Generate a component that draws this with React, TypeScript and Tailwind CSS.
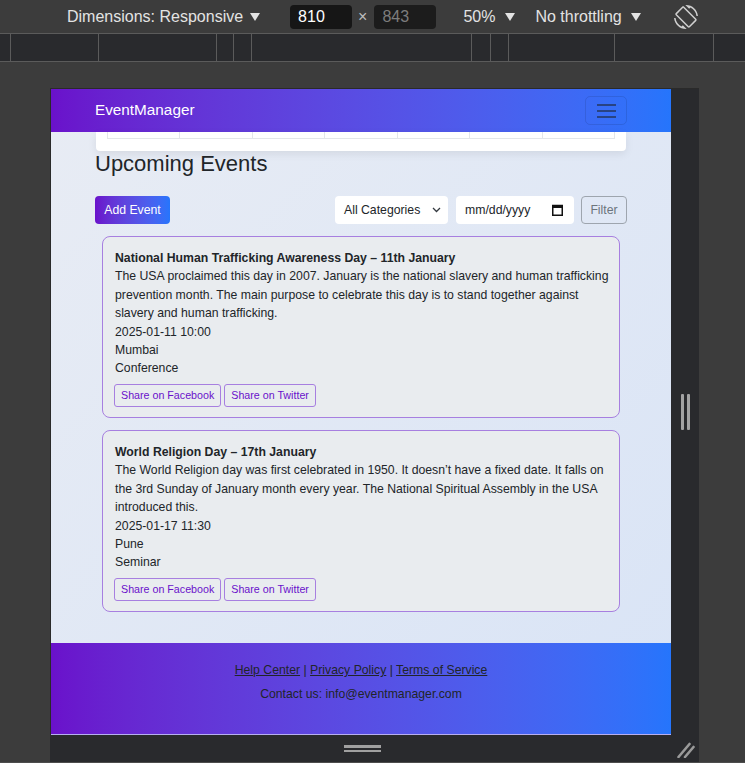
import type { ReactNode } from 'react';

const events = [
  {
    title: 'National Human Trafficking Awareness Day – 11th January',
    description:
      'The USA proclaimed this day in 2007. January is the national slavery and human trafficking prevention month. The main purpose to celebrate this day is to stand together against slavery and human trafficking.',
    date: '2025-01-11 10:00',
    location: 'Mumbai',
    category: 'Conference',
  },
  {
    title: 'World Religion Day – 17th January',
    description:
      'The World Religion day was first celebrated in 1950. It doesn’t have a fixed date. It falls on the 3rd Sunday of January month every year. The National Spiritual Assembly in the USA introduced this.',
    date: '2025-01-17 11:30',
    location: 'Pune',
    category: 'Seminar',
  },
];

const rulerMarks = [10, 98, 216, 233, 251, 471, 490, 508, 614, 713];

function Caret() {
  return (
    <svg width="10" height="8" viewBox="0 0 10 8" className="shrink-0">
      <path d="M0 0h10L5 8z" fill="#e3e3e3" />
    </svg>
  );
}

function DeviceToolbar() {
  return (
    <div className="flex h-[33px] items-center pl-[67px] text-[16px] text-[#e3e3e3]">
      <span>Dimensions: Responsive</span>
      <span className="ml-[7px]">
        <Caret />
      </span>
      <div className="ml-[30px] flex h-[24px] w-[62px] items-center rounded-[4px] bg-[#161616] pl-[8px] text-white">
        810
      </div>
      <span className="ml-[6px] text-[#bdbdbd]">×</span>
      <div className="ml-[7px] flex h-[24px] w-[62px] items-center rounded-[4px] bg-[#1c1c1c] pl-[8px] text-[#7d7d7d]">
        843
      </div>
      <span className="ml-[27px]">50%</span>
      <span className="ml-[10px]">
        <Caret />
      </span>
      <span className="ml-[20px]">No throttling</span>
      <span className="ml-[9px]">
        <Caret />
      </span>
      <svg width="24" height="24" viewBox="0 0 24 24" className="ml-[33px]" fill="#cfcfcf">
        <path d="M16.48 2.52c3.27 1.55 5.61 4.72 5.970 8.48h1.5C23.44 4.84 18.29 0 12 0l-.66.03 3.81 3.81 1.33-1.32zm-6.25-.77c-.59-.59-1.54-.59-2.12 0L1.750 8.11c-.59.59-.59 1.54 0 2.12l12.02 12.02c.59.59 1.54.59 2.12 0l6.36-6.36c.59-.59.59-1.54 0-2.12L10.23 1.75zm4.6 19.44L2.81 9.17l6.36-6.36 12.02 12.02-6.36 6.36zm-7.31.29C4.25 19.94 1.91 16.76 1.55 13H.05C.56 19.16 5.71 24 12 24l.66-.03-3.81-3.81-1.33 1.32z" />
      </svg>
    </div>
  );
}

function Ruler() {
  return (
    <div className="h-[29px] border-y border-[#5b5b5b] bg-[#292a2d]">
      <svg width="745" height="27" className="block">
        {rulerMarks.map((x) => (
          <rect key={x} x={x} y={0} width={1} height={27} fill="#5b5b5b" />
        ))}
      </svg>
    </div>
  );
}

function Navbar() {
  return (
    <nav className="flex h-[43px] items-center justify-between bg-linear-to-r from-[#6a11cb] to-[#2575fc] pl-[44px] pr-[44px]">
      <span className="text-[15.3px] text-white">EventManager</span>
      <button className="flex h-[29px] w-[42px] items-center justify-center rounded-[5px] border border-black/10">
        <svg width="19" height="14" viewBox="0 0 19 14">
          <path d="M0 1h19M0 7h19M0 13h19" stroke="#24365d" strokeWidth="1.3" />
        </svg>
      </button>
    </nav>
  );
}

function CalendarPeek() {
  return (
    <div className="ml-[1px] h-[19px] w-[530px] rounded-b-[4px] bg-white pl-[11px] shadow-[0_3px_8px_rgba(0,0,0,0.08)]">
      <div className="grid h-[7px] w-[508px] grid-cols-7 border-b border-l border-[#e3e6ea]">
        {Array.from({ length: 7 }).map((_, i) => (
          <div key={i} className="border-r border-[#e3e6ea]" />
        ))}
      </div>
    </div>
  );
}

function FilterBar() {
  return (
    <div className="mt-[19px] flex h-[28px] items-center justify-between text-[12.25px]">
      <button className="h-[28px] w-[75px] rounded-[4px] bg-linear-to-r from-[#6a11cb] to-[#2575fc] text-white">
        Add Event
      </button>
      <div className="flex items-center">
        <div className="flex h-[28px] w-[113px] items-center rounded-[4px] bg-white pl-[9px] text-[#212529]">
          <span>All Categories</span>
          <svg width="9" height="6" viewBox="0 0 9 6" className="ml-[12px]">
            <path d="M1 1l3.5 3.5L8 1" stroke="#343a40" strokeWidth="1.3" fill="none" />
          </svg>
        </div>
        <div className="ml-[8px] flex h-[28px] w-[118px] items-center rounded-[4px] bg-white pl-[9px] text-[#212529]">
          <span>mm/dd/yyyy</span>
          <svg width="11" height="12" viewBox="0 0 11 12" className="ml-[22px]">
            <rect x="0.75" y="1.5" width="9.5" height="9.75" fill="none" stroke="#111" strokeWidth="1.5" />
            <rect x="0.75" y="1.5" width="9.5" height="2.5" fill="#111" />
          </svg>
        </div>
        <button className="ml-[7px] h-[28px] w-[46px] rounded-[4px] border border-[#9ea5ae] text-[#6c757d]">
          Filter
        </button>
      </div>
    </div>
  );
}

function ShareButton({ children }: { children: ReactNode }) {
  return (
    <button className="h-[23px] rounded-[3px] border border-[#a77fe0] px-[6px] text-[10.7px] text-[#6a11cb]">
      {children}
    </button>
  );
}

function EventCard({ event }: { event: (typeof events)[number] }) {
  return (
    <div className="h-[182px] rounded-[8px] border border-[#a77fe0] bg-[#e9ecef] pt-[12px] pl-[11px] pr-[10px] text-[12.25px] leading-[18.37px] text-[#212529]">
      <div className="pl-[1px] font-bold">{event.title}</div>
      <div className="pl-[1px]">{event.description}</div>
      <div className="pl-[1px]">{event.date}</div>
      <div className="pl-[1px]">{event.location}</div>
      <div className="pl-[1px]">{event.category}</div>
      <div className="mt-[6px] flex gap-[3px]">
        <ShareButton>Share on Facebook</ShareButton>
        <ShareButton>Share on Twitter</ShareButton>
      </div>
    </div>
  );
}

function Footer() {
  return (
    <footer className="h-[91px] bg-linear-to-r from-[#6a11cb] to-[#2575fc] pt-[18px] text-center text-[12.25px] leading-[18.37px] text-[#212529]">
      <p className="mb-[6px]">
        <a className="underline">Help Center</a> | <a className="underline">Privacy Policy</a> |{' '}
        <a className="underline">Terms of Service</a>
      </p>
      <p>Contact us: info@eventmanager.com</p>
    </footer>
  );
}

function Page() {
  return (
    <div className="w-[620px] bg-linear-to-br from-[#e8ecf4] to-[#d9e4f6] font-['Liberation_Sans',Arial,sans-serif]">
      <Navbar />
      <div className="px-[44px]">
        <CalendarPeek />
        <h2 className="h-[26px] text-[22px] leading-[26px] text-[#212529]">Upcoming Events</h2>
        <FilterBar />
        <div className="mx-[7px] mt-[12px] flex flex-col gap-[12px]">
          {events.map((ev) => (
            <EventCard key={ev.title} event={ev} />
          ))}
        </div>
      </div>
      <div className="h-[31px]" />
      <Footer />
      <div className="h-[1px] bg-[#b7aef0]" />
    </div>
  );
}

export default function App() {
  return (
    <div className="flex h-[763px] w-[745px] flex-col overflow-hidden bg-[#3c3c3c] font-['Liberation_Sans',Arial,sans-serif]">
      <DeviceToolbar />
      <Ruler />
      <div className="h-[26px] shrink-0" />
      <div className="ml-[50px] flex w-[649px] flex-col">
        <div className="flex border-t border-[#2a2a2a]">
          <div className="border-l border-[#2a2a2a]">
            <Page />
          </div>
          <div className="flex w-[28px] items-center justify-center gap-[3px] bg-[#292a2d]">
            <div className="h-[36px] w-[3px] rounded-[1px] bg-[#a3a3a3]" />
            <div className="h-[36px] w-[3px] rounded-[1px] bg-[#a3a3a3]" />
          </div>
        </div>
        <div className="flex h-[27px] items-start bg-[#292a2d]">
          <div className="ml-[294px] mt-[10px] flex flex-col gap-[2px]">
            <div className="h-[2.5px] w-[37px] bg-[#a0a0a0]" />
            <div className="h-[2.5px] w-[37px] bg-[#a0a0a0]" />
          </div>
          <svg width="18" height="18" viewBox="0 0 18 18" className="ml-[296px] mt-[5px]">
            <path d="M1.5 17L12.5 4M8 17L16.5 7" stroke="#9a9a9a" strokeWidth="2.6" strokeLinecap="round" />
          </svg>
        </div>
      </div>
      <div className="mt-auto h-[1px] bg-[#4d4d4d]" />
    </div>
  );
}
